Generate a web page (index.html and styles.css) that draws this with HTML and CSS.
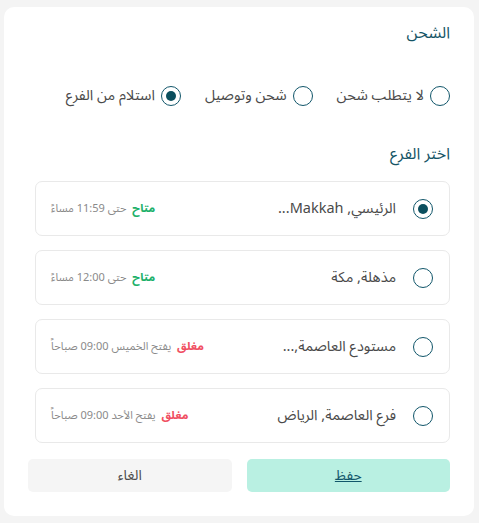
FILE: index.html
```html
<!DOCTYPE html>
<html lang="ar" dir="rtl">
<head>
    <meta charset="UTF-8">
    <meta name="viewport" content="width=device-width, initial-scale=1.0">
    <title>الشحن</title>
    <link rel="stylesheet" href="styles.css">
</head>
<body>

    <div class="card">
        <h2 class="title">الشحن</h2>

        <div class="ship-options">
            <label class="option"><span class="radio"></span>لا يتطلب شحن</label>
            <label class="option"><span class="radio"></span>شحن وتوصيل</label>
            <label class="option"><span class="radio checked"></span>استلام من الفرع</label>
        </div>

        <h3 class="subtitle">اختر الفرع</h3>

        <div class="branches">
            <div class="branch">
                <span class="radio checked"></span>
                <span class="branch-name">الرئيسي, Makkah...</span>
                <span class="branch-status">
                    <b class="open">متاح</b> حتى 11:59 مساءً
                </span>
            </div>
            <div class="branch">
                <span class="radio"></span>
                <span class="branch-name">مذهلة, مكة</span>
                <span class="branch-status">
                    <b class="open">متاح</b> حتى 12:00 مساءً
                </span>
            </div>
            <div class="branch">
                <span class="radio"></span>
                <span class="branch-name">مستودع العاصمة,...</span>
                <span class="branch-status">
                    <b class="closed">مغلق</b> يفتح الخميس 09:00 صباحاً
                </span>
            </div>
            <div class="branch">
                <span class="radio"></span>
                <span class="branch-name">فرع العاصمة, الرياض</span>
                <span class="branch-status">
                    <b class="closed">مغلق</b> يفتح الأحد 09:00 صباحاً
                </span>
            </div>
        </div>

        <div class="actions">
            <button class="btn save">حفظ</button>
            <button class="btn cancel">الغاء</button>
        </div>
    </div>

</body>
</html>
```

FILE: styles.css
```css
body {
    margin: 0;
    background-color: #f4f4f4;
    font-family: "Noto Sans Arabic", "DejaVu Sans", sans-serif;
    color: #4a4a4a;
}

.card {
    background-color: #fff;
    margin: 7px 5px 7px 4px;
    border-radius: 10px;
    padding: 14px 24px 24px 24px;
    height: 509px;
    box-sizing: border-box;
}

.title {
    margin: 0;
    font-size: 16px;
    font-weight: normal;
    color: #155566;
    line-height: 24px;
}

.ship-options {
    display: flex;
    gap: 24px;
    margin-top: 40px;
}

.option {
    display: flex;
    align-items: center;
    gap: 6px;
    font-size: 14.5px;
    line-height: 22px;
    color: #4a4a4a;
}

.radio {
    width: 20px;
    height: 20px;
    border: 1.5px solid #11566a;
    border-radius: 50%;
    box-sizing: border-box;
    display: flex;
    align-items: center;
    justify-content: center;
    flex-shrink: 0;
}

.radio.checked::after {
    content: "";
    width: 10px;
    height: 10px;
    border-radius: 50%;
    background-color: #0b4f5e;
}

.subtitle {
    margin: 35px 0 0 0;
    font-size: 16px;
    font-weight: normal;
    color: #155566;
    line-height: 24px;
}

.branches {
    display: flex;
    flex-direction: column;
    gap: 14px;
    margin: 15px 0 0 7px;
}

.branch {
    display: flex;
    align-items: center;
    height: 55px;
    border: 1px solid #e9e9e9;
    border-radius: 7px;
    padding: 0 16px 0 15px;
    box-sizing: border-box;
}

.branch-name {
    margin-right: 17px;
    font-size: 14.5px;
    line-height: 22px;
    color: #4a4a4a;
}

.branch-status {
    margin-right: auto;
    font-size: 11px;
    line-height: 16px;
    color: #8a8a8a;
}

.branch-status b {
    font-size: 11.5px;
    margin-left: 3px;
}

.open {
    color: #1bb06a;
}

.closed {
    color: #f04f62;
}

.actions {
    display: flex;
    gap: 15px;
    margin-top: 16px;
}

.btn {
    flex: 1;
    height: 33px;
    border: none;
    border-radius: 5px;
    font-family: inherit;
    font-size: 14px;
    cursor: pointer;
}

.save {
    background-color: #b9f0e2;
    color: #11566a;
    text-decoration: underline;
}

.cancel {
    background-color: #f5f5f5;
    color: #4a4a4a;
}
```
